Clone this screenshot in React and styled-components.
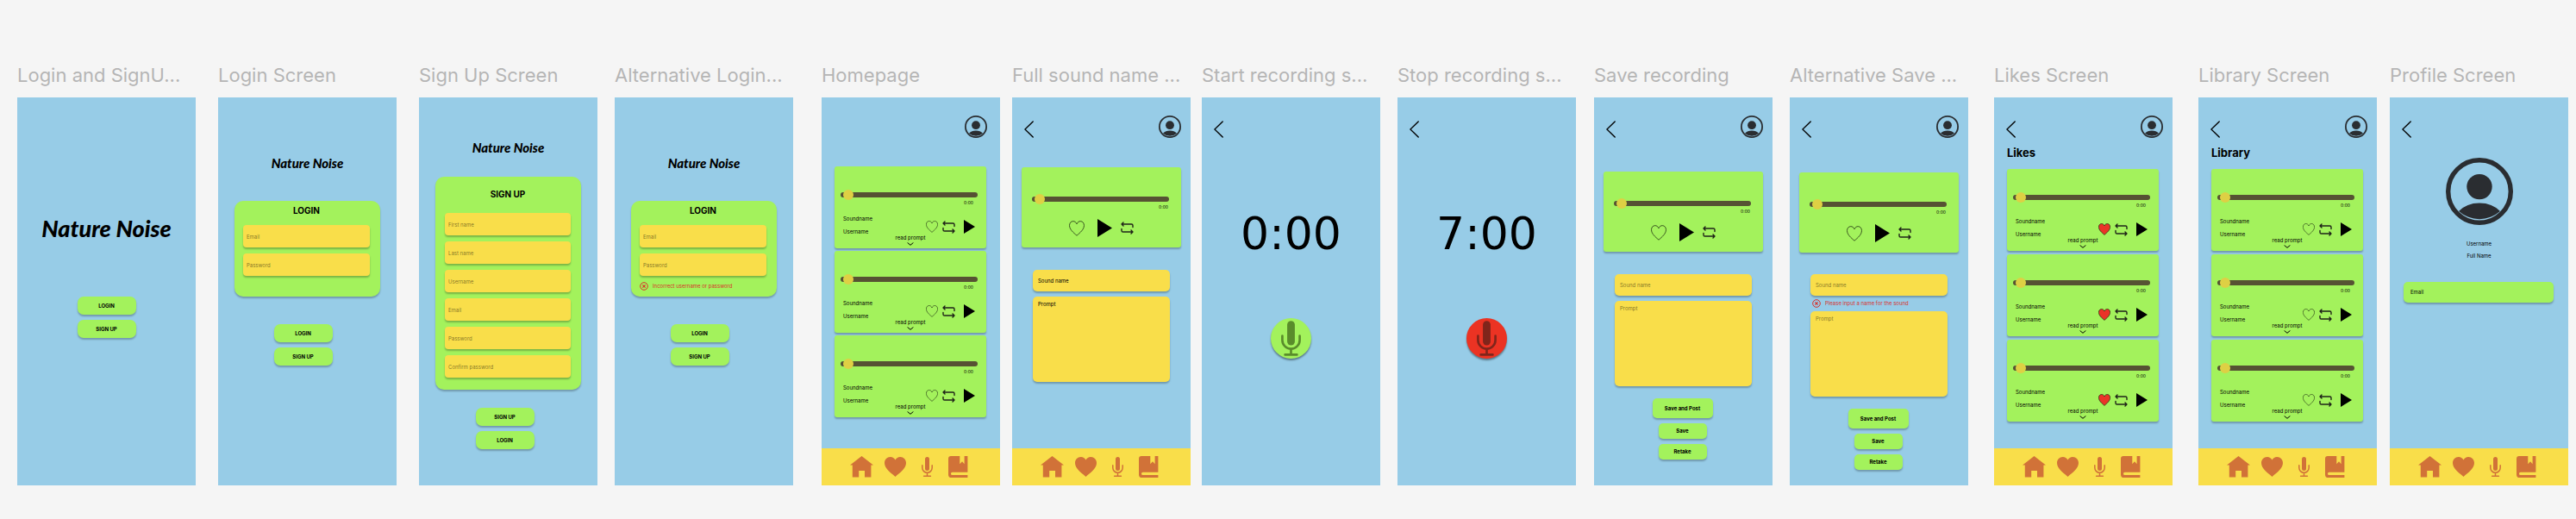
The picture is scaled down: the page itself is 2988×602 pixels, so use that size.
import React from "react";
import styled, { createGlobalStyle } from "styled-components";

const color = {
  page: "#f5f5f5",
  title: "#b5b5b5",
  sky: "#97cce7",
  leaf: "#a3f25c",
  sun: "#f9de4a",
  clay: "#d17238",
  ink: "#2a2d31",
  error: "#d9302a",
};

const softShadow = "0 2px 2px rgba(0, 0, 0, 0.25)";

const GlobalStyle = createGlobalStyle`
  * { box-sizing: border-box; }
  body {
    margin: 0;
    background: ${color.page};
    font-family: Inter, "Liberation Sans", sans-serif;
    color: #000;
  }
  button, input, textarea {
    font-family: inherit;
    color: inherit;
    margin: 0;
    border: 0;
    padding: 0;
    background: none;
  }
  button { cursor: pointer; }
  svg { display: block; flex: none; }
  h1, h2, h3, p { margin: 0; }
`;

/* ---------- board ---------- */

const Canvas = styled.main`
  display: flex;
  align-items: flex-start;
  padding: 73px 9px 39px 20px;
`;

const Column = styled.section`
  flex: 1 0 207px;
  margin-right: ${(p) => p.$gap || 0}px;
`;

const BoardTitle = styled.h2`
  margin-bottom: 12px;
  font-size: 22px;
  line-height: 28px;
  font-weight: 400;
  color: ${color.title};
  white-space: nowrap;
`;

const Screen = styled.div`
  display: flex;
  flex-direction: column;
  min-height: 450px;
  background: ${color.sky};
`;

const Logo = styled.h1`
  margin-top: ${(p) => p.$top}px;
  font-family: Lato, "Liberation Sans", sans-serif;
  font-weight: 900;
  font-style: italic;
  font-size: ${(p) => (p.$large ? 27 : 15)}px;
  line-height: ${(p) => (p.$large ? 32 : 18)}px;
  text-align: center;
  white-space: nowrap;
`;

const Header = styled.header`
  display: flex;
  align-items: flex-end;
  justify-content: space-between;
  min-height: 47px;
  padding: 21px ${(p) => (p.$home ? 15 : 11)}px 0 14px;
`;

const IconButton = styled.button`
  display: block;
  flex: none;
`;

/* ---------- forms ---------- */

const FormCard = styled.form`
  display: flex;
  flex-direction: column;
  gap: 7px;
  margin: ${(p) => p.$top}px 19px 0;
  padding: ${(p) => (p.$roomy ? "13px 12px 14px 11px" : "4px 12px 0 10px")};
  min-height: 111px;
  border-radius: 10px;
  background: ${color.leaf};
  box-shadow: ${softShadow};
`;

const FormTitle = styled.h3`
  margin-bottom: ${(p) => (p.$roomy ? 7 : 2)}px;
  font-size: 10px;
  line-height: 15px;
  font-weight: 700;
  text-align: center;
`;

const fieldText = `
  display: block;
  width: 100%;
  font-size: 6px;
  line-height: 8px;
  background: ${color.sun};
  &::placeholder { color: rgba(0, 0, 0, 0.5); opacity: 1; }
`;

const FormInput = styled.input`
  && {
    ${fieldText}
    height: 26px;
    padding: 0 4px;
    border-radius: 4px;
    background: ${color.sun};
    box-shadow: ${softShadow};
  }
`;

const ErrorLine = styled.p`
  display: flex;
  align-items: center;
  gap: 5px;
  padding-left: ${(p) => p.$inset || 0}px;
  font-size: 6px;
  line-height: 10px;
  color: ${color.error};
  white-space: nowrap;
`;

const Actions = styled.div`
  display: flex;
  flex-direction: column;
  align-items: center;
  gap: 6px;
  margin-top: ${(p) => p.$top}px;
  padding-right: ${(p) => p.$inset || 0}px;
`;

const heights = { medium: 21, large: 23, small: 18 };
const widths = { medium: 68, large: 70, small: 56 };

const ActionButton = styled.button`
  && {
    width: ${(p) => widths[p.$size || "medium"]}px;
    height: ${(p) => heights[p.$size || "medium"]}px;
    border-radius: ${(p) => (p.$size ? 5 : 7)}px;
    background: ${color.leaf};
    box-shadow: ${softShadow};
    font-size: 6px;
    line-height: 8px;
    font-weight: 700;
  }
`;

const NoteFields = styled.div`
  display: flex;
  flex-direction: column;
  gap: ${(p) => (p.$tight ? 4 : 6)}px;
  margin: ${(p) => p.$top}px 24px 0;
`;

const NameInput = styled.input`
  && {
    ${fieldText}
    height: 25px;
    padding: 0 6px;
    border-radius: 5px;
    background: ${color.sun};
    box-shadow: ${softShadow};
  }
`;

const PromptInput = styled.textarea`
  && {
    ${fieldText}
    height: 99px;
    padding: 5px 6px;
    border-radius: 5px;
    background: ${color.sun};
    box-shadow: ${softShadow};
    resize: none;
    overflow: hidden;
  }
`;

/* ---------- sound cards ---------- */

const SoundList = styled.div`
  display: flex;
  flex-direction: column;
  gap: ${(p) => p.$gap}px;
  margin: ${(p) => p.$top}px 16px 0 15px;
`;

const SoundCard = styled.article`
  display: flex;
  flex-direction: column;
  padding: 27px 0 3px;
  border-radius: 3px;
  background: ${color.leaf};
  box-shadow: ${softShadow};
`;

const PlayerCard = styled.article`
  display: flex;
  flex-direction: column;
  margin: ${(p) => p.$top}px 11px 0;
  padding: 31px 0 12px;
  border-radius: 3px;
  background: ${color.leaf};
  box-shadow: ${softShadow};
`;

const SliderRow = styled.div`
  display: flex;
  padding: ${(p) => (p.$wide ? "0 14px 0 12px" : "0 10px 0 7px")};
`;

const Slider = styled.input`
  && {
    appearance: none;
    flex: 1;
    min-width: 0;
    height: 12px;
  }
  &::-webkit-slider-runnable-track {
    height: 6px;
    border-radius: 3px;
    background: #565233;
  }
  &::-webkit-slider-thumb {
    appearance: none;
    width: 12px;
    height: 12px;
    margin-top: -3px;
    border-radius: 50%;
    background: #ded044;
  }
`;

const Elapsed = styled.time`
  padding-right: 15px;
  font-size: 5px;
  line-height: 6px;
  text-align: right;
`;

const SoundRow = styled.div`
  display: flex;
  justify-content: space-between;
  margin-top: 12px;
  padding: 0 13px 0 10px;
`;

const SoundInfo = styled.div`
  display: flex;
  flex-direction: column;
  gap: 7px;
  font-size: 6px;
  line-height: 8px;
`;

const Controls = styled.div`
  display: flex;
  align-items: center;
  justify-content: center;
  gap: ${(p) => (p.$wide ? 10 : 5)}px;
  margin-top: ${(p) => (p.$wide ? 11 : 3)}px;
`;

const PlayButton = styled(IconButton)`
  && { margin-left: 5px; }
`;

const ReadPrompt = styled.button`
  display: flex;
  flex-direction: column;
  align-items: center;
  align-self: center;
  gap: 2px;
  font-size: 6px;
  line-height: 6px;
`;

const ListTitle = styled.h3`
  margin: 8px 0 0 15px;
  font-size: 13px;
  line-height: 18px;
  font-weight: 700;
`;

/* ---------- recorder & profile ---------- */

const Timer = styled.div`
  margin-top: 85px;
  font-family: "DejaVu Sans", sans-serif;
  font-size: 52px;
  line-height: 52px;
  text-align: center;
`;

const RecordButton = styled.button`
  && {
    display: flex;
    align-items: center;
    justify-content: center;
    align-self: center;
    width: 47px;
    height: 47px;
    margin-top: 72px;
    border-radius: 50%;
    background: ${(p) => (p.$active ? "#eb3323" : color.leaf)};
    box-shadow: 0 2px 2px rgba(0, 0, 0, 0.4);
    color: ${(p) => (p.$active ? "#80251b" : "#5a8c2b")};
  }
`;

const Profile = styled.div`
  display: flex;
  flex-direction: column;
  align-items: center;
  gap: 6px;
  margin-top: 23px;
  font-size: 6px;
  line-height: 8px;
`;

const ProfilePicture = styled.div`
  margin-bottom: 12px;
`;

const EmailBox = styled.p`
  margin: 26px 17px 0 16px;
  padding: 8px;
  border-radius: 5px;
  background: ${color.leaf};
  box-shadow: ${softShadow};
  font-size: 6px;
  line-height: 8px;
`;

/* ---------- navigation ---------- */

const NavBar = styled.nav`
  display: flex;
  align-items: center;
  justify-content: center;
  gap: 13px;
  margin-top: auto;
  padding: 9px 4px 9px 0;
  background: ${color.sun};
  color: ${color.clay};
`;

const NavLink = styled.a`
  display: flex;
  justify-content: center;
  min-width: 23px;
  color: inherit;
`;

/* ---------- icons ---------- */

const BackIcon = () => (
  <svg width="11" height="20" viewBox="0 0 11 20" fill="none" stroke="#000" strokeWidth="1.4" strokeLinecap="round">
    <path d="M10.2 1L.9 10L10.2 19" />
  </svg>
);

const AvatarIcon = ({ size = 26 }) => (
  <svg width={size} height={size} viewBox="0 0 26 26" fill={color.ink}>
    <circle cx="13" cy="13" r="12.1" fill="none" stroke={color.ink} strokeWidth="1.8" />
    <circle cx="13" cy="11.2" r="4.9" />
    <path d="M5 20.7Q8 17.5 13 17.5T21 20.7A12.1 12.1 0 0 1 5 20.7Z" />
  </svg>
);

const HeartIcon = ({ size = 14, liked }) => (
  <svg width={size} height={size} viewBox="0 0 14 14" fill={liked ? "#ea3428" : "none"} stroke="#1c2b10" strokeWidth={liked ? 0.7 : 0.6}>
    <path d="M7 3C6.3 1.2 5 .5 3.7 .5C1.7 .5 .4 2.2 .4 4.3C.4 7.8 4 10.8 7 13.4C10 10.8 13.6 7.8 13.6 4.3C13.6 2.2 12.3 .5 10.3 .5C9 .5 7.7 1.2 7 3Z" />
  </svg>
);

const RepeatIcon = () => (
  <svg width="15" height="15" viewBox="0 0 15 15" fill="none" stroke="#1f2318" strokeWidth="1.4" strokeLinecap="round" strokeLinejoin="round">
    <path d="M1 3H12.4Q14 3 14 4.6V6.6M3 1L1 3L3 5M1 8.4V10.4Q1 12 2.6 12H14M12 10L14 12L12 14" />
  </svg>
);

const PlayIcon = ({ size = 16 }) => (
  <svg width={Math.round(size * 0.8)} height={size} viewBox="0 0 13 16">
    <path d="M0 0L13 8L0 16Z" />
  </svg>
);

const ChevronIcon = () => (
  <svg width="8" height="4" viewBox="0 0 8 4" fill="none" stroke="#000" strokeWidth="1">
    <path d="M.6 .5L4 3.3L7.4 .5" />
  </svg>
);

const ErrorIcon = () => (
  <svg width="10" height="10" viewBox="0 0 10 10" fill="none" stroke={color.error} strokeWidth="1">
    <circle cx="5" cy="5" r="4.3" />
    <path d="M3.4 3.4L6.6 6.6M6.6 3.4L3.4 6.6" strokeWidth="1.2" />
  </svg>
);

const MicIcon = ({ width = 13, height = 23 }) => (
  <svg width={width} height={height} viewBox="0 0 13 23" fill="none" stroke="currentColor" strokeWidth="1.5" strokeLinecap="round">
    <rect x="4" y="0" width="5" height="16" rx="2.5" fill="currentColor" stroke="none" />
    <path d="M.8 9.8V12.6A5.7 5.7 0 0 0 12.2 12.6V9.8M6.5 18.5V22M2.6 22.2H10.4" />
  </svg>
);

const HomeIcon = () => (
  <svg width="27" height="25" viewBox="0 0 27 25" fill="currentColor">
    <path d="M13.5 0L27 10.4H24.4V24.6H17V17H10.2V24.6H2.8V10.4H0Z" />
  </svg>
);

const NavHeartIcon = () => (
  <svg width="25" height="23" viewBox="0 0 25 23" fill="currentColor">
    <path d="M12.5 3.6C11.3 1.2 9.200 0 6.800 0C3 0 0 3 0 7.100C0 13.600 6.800 18.200 12.500 23C18.200 18.200 25 13.600 25 7.100C25 3 22 0 18.200 0C15.800 0 13.700 1.200 12.500 3.600Z" />
  </svg>
);

const BookIcon = () => (
  <svg width="23" height="25" viewBox="0 0 23 25" fill="currentColor" fillRule="evenodd">
    <path d="M3 0H22.400V25H3.600Q0 25 0 21.400V3Q0 0 3 0ZM13.300 0V9.300L16 6.300L18.600 9.300V0ZM22.400 18.800H4.600Q3 18.800 3 20.400T4.600 22H22.400Z" />
  </svg>
);

/* ---------- composed parts ---------- */

const Board = ({ title, gap, children }) => (
  <Column $gap={gap}>
    <BoardTitle>{title}</BoardTitle>
    <Screen>{children}</Screen>
  </Column>
);

const TopBar = ({ back = true, avatar = true }) => (
  <Header $home={!back}>
    {back ? <IconButton aria-label="Back"><BackIcon /></IconButton> : <span />}
    {avatar && <IconButton aria-label="Profile"><AvatarIcon /></IconButton>}
  </Header>
);

const BottomNav = () => (
  <NavBar>
    <NavLink href="#home" aria-label="Home"><HomeIcon /></NavLink>
    <NavLink href="#likes" aria-label="Likes"><NavHeartIcon /></NavLink>
    <NavLink href="#record" aria-label="Record"><MicIcon /></NavLink>
    <NavLink href="#library" aria-label="Library"><BookIcon /></NavLink>
  </NavBar>
);

const Position = ({ wide }) => (
  <>
    <SliderRow $wide={wide}>
      <Slider type="range" min="0" max="100" defaultValue="2" aria-label="Playback position" />
    </SliderRow>
    <Elapsed>0:00</Elapsed>
  </>
);

const Sound = ({ liked }) => (
  <SoundCard>
    <Position />
    <SoundRow>
      <SoundInfo>
        <span>Soundname</span>
        <span>Username</span>
      </SoundInfo>
      <Controls>
        <IconButton aria-label="Like"><HeartIcon liked={liked} /></IconButton>
        <IconButton aria-label="Repeat"><RepeatIcon /></IconButton>
        <PlayButton aria-label="Play"><PlayIcon /></PlayButton>
      </Controls>
    </SoundRow>
    <ReadPrompt>
      read prompt
      <ChevronIcon />
    </ReadPrompt>
  </SoundCard>
);

const Sounds = ({ liked, gap, top }) => (
  <SoundList $gap={gap} $top={top}>
    {[0, 1, 2].map((n) => <Sound key={n} liked={liked} />)}
  </SoundList>
);

const Player = ({ top }) => (
  <PlayerCard $top={top}>
    <Position wide />
    <Controls $wide>
      <IconButton aria-label="Like"><HeartIcon size={18} /></IconButton>
      <PlayButton aria-label="Play"><PlayIcon size={21} /></PlayButton>
      <IconButton aria-label="Repeat"><RepeatIcon /></IconButton>
    </Controls>
  </PlayerCard>
);

const LoginForm = ({ error }) => (
  <>
    <Logo $top={67}>Nature Noise</Logo>
    <FormCard $top={35}>
      <FormTitle>LOGIN</FormTitle>
      <FormInput type="email" placeholder="Email" aria-label="Email" />
      <FormInput type="password" placeholder="Password" aria-label="Password" />
      {error && <ErrorLine role="alert"><ErrorIcon />{error}</ErrorLine>}
    </FormCard>
    <Actions $top={32} $inset={10}>
      <ActionButton>LOGIN</ActionButton>
      <ActionButton>SIGN UP</ActionButton>
    </Actions>
  </>
);

const signUpFields = ["First name", "Last name", "Username", "Email", "Password", "Confirm password"];

const SaveActions = ({ top }) => (
  <Actions $top={top} $inset={2}>
    <ActionButton $size="large">Save and Post</ActionButton>
    <ActionButton $size="small">Save</ActionButton>
    <ActionButton $size="small">Retake</ActionButton>
  </Actions>
);

const Recorder = ({ time, active }) => (
  <>
    <TopBar avatar={false} />
    <Timer>{time}</Timer>
    <RecordButton $active={active} aria-label={active ? "Stop recording" : "Start recording"}>
      <MicIcon width={23} height={41} />
    </RecordButton>
  </>
);

export default function App() {
  return (
    <>
      <GlobalStyle />
      <Canvas>
        <Board title="Login and SignU..." gap={26}>
          <Logo $large $top={136}>Nature Noise</Logo>
          <Actions $top={63}>
            <ActionButton>LOGIN</ActionButton>
            <ActionButton>SIGN UP</ActionButton>
          </Actions>
        </Board>

        <Board title="Login Screen" gap={26}>
          <LoginForm />
        </Board>

        <Board title="Sign Up Screen" gap={20}>
          <Logo $top={49}>Nature Noise</Logo>
          <FormCard $top={25} $roomy>
            <FormTitle $roomy>SIGN UP</FormTitle>
            {signUpFields.map((name) => (
              <FormInput key={name} placeholder={name} aria-label={name} />
            ))}
          </FormCard>
          <Actions $top={21} $inset={8}>
            <ActionButton>SIGN UP</ActionButton>
            <ActionButton>LOGIN</ActionButton>
          </Actions>
        </Board>

        <Board title="Alternative Login..." gap={33}>
          <LoginForm error="Incorrect username or password" />
        </Board>

        <Board title="Homepage" gap={14}>
          <TopBar back={false} />
          <Sounds gap={3} top={33} />
          <BottomNav />
        </Board>

        <Board title="Full sound name ..." gap={13}>
          <TopBar />
          <Player top={34} />
          <NoteFields $top={26}>
            <NameInput defaultValue="Sound name" aria-label="Sound name" />
            <PromptInput defaultValue="Prompt" aria-label="Prompt" />
          </NoteFields>
          <BottomNav />
        </Board>

        <Board title="Start recording s..." gap={20}>
          <Recorder time="0:00" />
        </Board>

        <Board title="Stop recording s..." gap={21}>
          <Recorder time="7:00" active />
        </Board>

        <Board title="Save recording" gap={20}>
          <TopBar />
          <Player top={39} />
          <NoteFields $top={26}>
            <NameInput placeholder="Sound name" aria-label="Sound name" />
            <PromptInput placeholder="Prompt" aria-label="Prompt" />
          </NoteFields>
          <SaveActions top={14} />
        </Board>

        <Board title="Alternative Save ..." gap={30}>
          <TopBar />
          <Player top={40} />
          <NoteFields $top={25} $tight>
            <NameInput placeholder="Sound name" aria-label="Sound name" />
            <ErrorLine role="alert" $inset={2}><ErrorIcon />Please input a name for the sound</ErrorLine>
            <PromptInput placeholder="Prompt" aria-label="Prompt" />
          </NoteFields>
          <SaveActions top={14} />
        </Board>

        <Board title="Likes Screen" gap={30}>
          <TopBar />
          <ListTitle>Likes</ListTitle>
          <Sounds liked gap={4} top={10} />
          <BottomNav />
        </Board>

        <Board title="Library Screen" gap={15}>
          <TopBar />
          <ListTitle>Library</ListTitle>
          <Sounds gap={4} top={10} />
          <BottomNav />
        </Board>

        <Board title="Profile Screen">
          <TopBar avatar={false} />
          <Profile>
            <ProfilePicture><AvatarIcon size={78} /></ProfilePicture>
            <span>Username</span>
            <span>Full Name</span>
          </Profile>
          <EmailBox>Email</EmailBox>
          <BottomNav />
        </Board>
      </Canvas>
    </>
  );
}
